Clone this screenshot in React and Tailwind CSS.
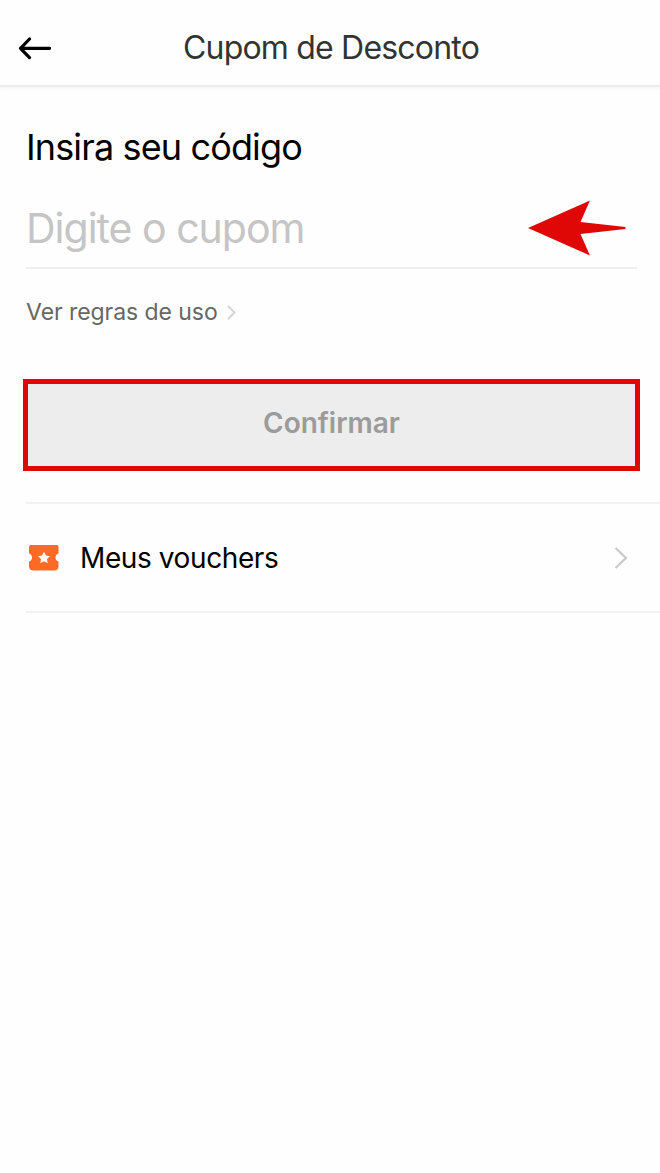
import React, { useState } from "react";

const BackIcon = () => (
  <svg width="34" height="24" viewBox="0 0 34 24" fill="none">
    <path
      d="M32.5 12.3H3.5M12.5 3L3.5 12.3L12.5 21.6"
      stroke="#000"
      strokeWidth="3.2"
      strokeLinecap="round"
      strokeLinejoin="round"
    />
  </svg>
);

const RedArrow = () => (
  <svg width="98" height="56" viewBox="0 0 98 56">
    <path
      d="M0 28L62 0.5L52.5 22L97.5 27V29L52.5 34L62 55.5Z"
      fill="#e00707"
    />
  </svg>
);

const TicketIcon = () => (
  <svg width="30" height="26" viewBox="0 0 30 26">
    <path
      d="M2 0H28Q29.5 0 29.5 2V8.5C25.5 9.5 25.5 15.5 29.5 16.5V21Q29.5 25.5 25 25.5H4.5Q0 25.5 0 21V16.5C4 15.5 4 9.5 0 8.5V2Q0 0 2 0Z"
      fill="#fd6a24"
    />
    <path
      d="M15 6.8L16.9 10.6L21 11.2L18 14.1L18.7 18.3L15 16.3L11.3 18.3L12 14.1L9 11.2L13.1 10.6Z"
      fill="#fff"
    />
  </svg>
);

const App = () => {
  const [code, setCode] = useState("");

  return (
    <div className="min-h-[1173px] w-[660px] bg-[#fefefe] font-['Inter',sans-serif] text-black">
      <header className="grid h-[87px] grid-cols-[70px_1fr_68px] items-center border-b-2 border-[#ececec] pt-2.5 shadow-[0_2px_3px_rgba(0,0,0,0.03)]">
        <button className="pl-[17px]" aria-label="Voltar">
          <BackIcon />
        </button>
        <h1 className="text-center text-[32px] leading-10 tracking-[-0.8px] whitespace-nowrap text-[#333]">
          Cupom de Desconto
        </h1>
      </header>

      <main>
        <section className="pt-[38px] pr-[23px] pl-[26px]">
          <h2 className="text-[36px] leading-[44px] tracking-[-0.86px]">
            Insira seu código
          </h2>
          <div className="mt-5 flex h-20 items-center border-b-2 border-[#f0f0f0] pr-[11px]">
            <input
              value={code}
              onChange={(e) => setCode(e.target.value)}
              placeholder="Digite o cupom"
              className="h-[60px] w-0 flex-1 pt-0.5 text-[41px] tracking-[-1px] outline-none placeholder:text-[#c5c5c5]"
            />
            <RedArrow />
          </div>
          <a className="mt-[27px] flex h-8 items-center text-[23px] tracking-[-0.06px] text-[#666]">
            <span>Ver regras de uso</span>
            <svg className="ml-[9px]" width="9" height="15" viewBox="0 0 9 15" fill="none">
              <path d="M1 1L7.5 7.5L1 14" stroke="#d2d2d2" strokeWidth="1.8" />
            </svg>
          </a>
        </section>

        <button className="mt-[51px] ml-[23px] flex h-[92px] w-[617px] items-center justify-center border-[5px] border-[#e00707] bg-[#ededed] pb-1 text-[28px] font-semibold text-[#9b9b9b]">
          <span>Confirmar</span>
        </button>

        <div className="mt-[31px] ml-[26px] flex h-[111px] items-center border-y-2 border-[#f2f2f2] pr-8 pl-[3px]">
          <TicketIcon />
          <span className="ml-[21px] flex-1 text-[28px] tracking-[-0.4px]">
            Meus vouchers
          </span>
          <svg width="14" height="22" viewBox="0 0 14 22" fill="none">
            <path d="M1.5 1L12 11L1.5 21" stroke="#c8c8c8" strokeWidth="2.2" />
          </svg>
        </div>
      </main>
    </div>
  );
};

export default App;
